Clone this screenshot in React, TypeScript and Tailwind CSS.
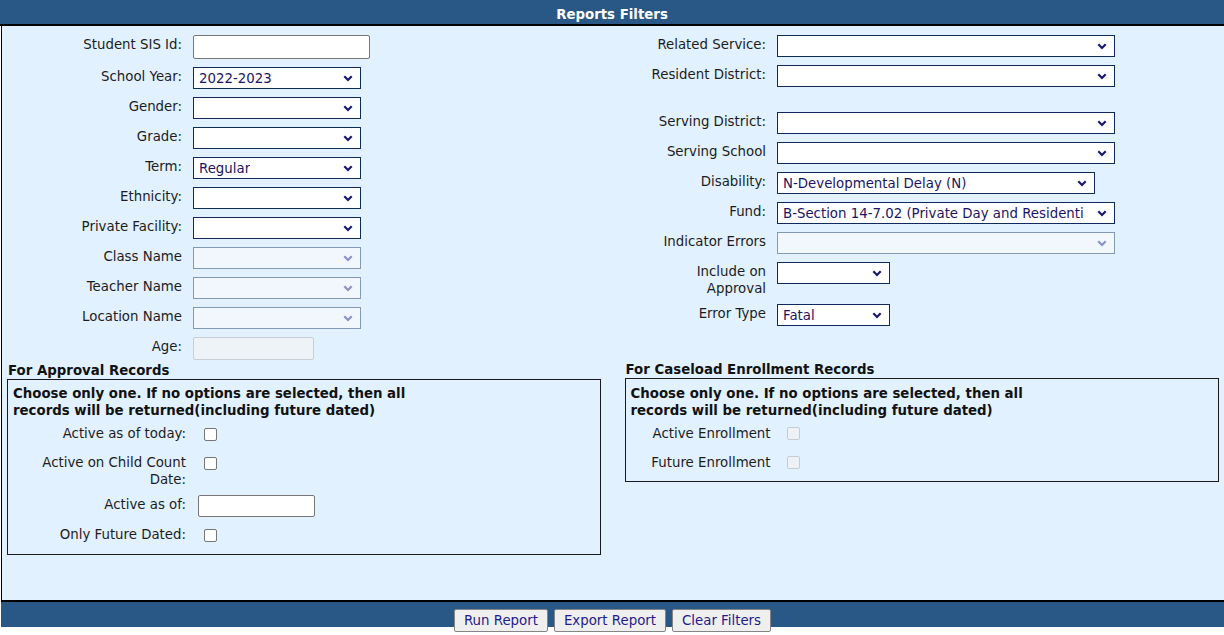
import React from "react";

const FONT = "font-['DejaVu_Sans',Verdana,sans-serif] text-[13.33px]";

function Chevron({ disabled }: { disabled?: boolean }) {
  return (
    <svg width="10" height="7" viewBox="0 0 10 7" className="shrink-0">
      <path
        d="M1.3 1.3 L5 5 L8.7 1.3"
        fill="none"
        stroke={disabled ? "#8c90cc" : "#1b1670"}
        strokeWidth="2.2"
      />
    </svg>
  );
}

function Select({ w, value, disabled }: { w: string; value?: string; disabled?: boolean }) {
  return (
    <div
      className={`flex h-[22px] items-center justify-between gap-[4px] border pl-[5px] pr-[7px] ${w} ${
        disabled ? "border-[#8399b8] bg-[#f2f7fd]" : "border-[#0e2c5b] bg-white"
      }`}
    >
      <span className="overflow-hidden whitespace-nowrap pt-[1px] leading-[20px] text-[#1b1464]">{value}</span>
      <Chevron disabled={disabled} />
    </div>
  );
}

function TextBox({ w, h, disabled }: { w: string; h: string; disabled?: boolean }) {
  return (
    <div
      className={`rounded-[2px] border ${w} ${h} ${
        disabled ? "border-[#c9ced4] bg-[#eef3f8]" : "border-[#767676] bg-white"
      }`}
    />
  );
}

function Check({ disabled }: { disabled?: boolean }) {
  return (
    <div
      className={`h-[13px] w-[13px] rounded-[2px] border ${
        disabled ? "border-[#c6ccd3] bg-[#eef2f7]" : "border-[#767676] bg-white"
      }`}
    />
  );
}

function LeftRow({ label, children, h = "h-[22px]" }: { label: React.ReactNode; children: React.ReactNode; h?: string }) {
  return (
    <div className={`flex items-start ${h}`}>
      <div className="w-[180px] pt-[1px] text-right leading-[17px] text-[#1c1c1c]">{label}</div>
      <div className="ml-[11px]">{children}</div>
    </div>
  );
}

function RightRow({ label, children, h = "h-[22px]", cls = "" }: { label: React.ReactNode; children: React.ReactNode; h?: string; cls?: string }) {
  return (
    <div className={`flex items-start ${h} ${cls}`}>
      <div className="w-[164px] pt-[1px] text-right leading-[17px] text-[#1c1c1c]">{label}</div>
      <div className="ml-[11px]">{children}</div>
    </div>
  );
}

const NOTE = (
  <p className="font-bold leading-[17px] text-[#111]">
    Choose only one. If no options are selected, then all
    <br />
    records will be returned(including future dated)
  </p>
);

export default function App() {
  return (
    <div className={`w-[1224px] h-[635px] overflow-hidden bg-white ${FONT}`}>
      {/* title bar */}
      <div className="h-[26px] border-b-2 border-black bg-[#295887] pt-[6px] text-center font-bold leading-[17px] text-white">
        Reports Filters
      </div>

      {/* body */}
      <div className="ml-[1px] h-[574px] border-l border-black bg-[#e2f1ff]">
        <div className="flex items-start pt-[9px]">
          {/* left column */}
          <div className="flex w-[600px] flex-col gap-[8px]">
            <LeftRow label="Student SIS Id:" h="h-[24px]">
              <TextBox w="w-[177px]" h="h-[24px]" />
            </LeftRow>
            <LeftRow label="School Year:">
              <Select w="w-[168px]" value="2022-2023" />
            </LeftRow>
            <LeftRow label="Gender:">
              <Select w="w-[168px]" />
            </LeftRow>
            <LeftRow label="Grade:">
              <Select w="w-[168px]" />
            </LeftRow>
            <LeftRow label="Term:">
              <Select w="w-[168px]" value="Regular" />
            </LeftRow>
            <LeftRow label="Ethnicity:">
              <Select w="w-[168px]" />
            </LeftRow>
            <LeftRow label="Private Facility:">
              <Select w="w-[168px]" />
            </LeftRow>
            <LeftRow label="Class Name">
              <Select w="w-[168px]" disabled />
            </LeftRow>
            <LeftRow label="Teacher Name">
              <Select w="w-[168px]" disabled />
            </LeftRow>
            <LeftRow label="Location Name">
              <Select w="w-[168px]" disabled />
            </LeftRow>
            <LeftRow label="Age:" h="h-[23px]">
              <TextBox w="w-[121px]" h="h-[23px]" disabled />
            </LeftRow>
          </div>

          {/* right column */}
          <div className="flex flex-col gap-[8px]">
            <RightRow label="Related Service:">
              <Select w="w-[338px]" />
            </RightRow>
            <RightRow label="Resident District:">
              <Select w="w-[338px]" />
            </RightRow>
            <RightRow label="Serving District:" cls="mt-[17px]">
              <Select w="w-[338px]" />
            </RightRow>
            <RightRow label="Serving School">
              <Select w="w-[338px]" />
            </RightRow>
            <RightRow label="Disability:">
              <Select w="w-[318px]" value="N-Developmental Delay (N)" />
            </RightRow>
            <RightRow label="Fund:">
              <Select w="w-[338px]" value="B-Section 14-7.02 (Private Day and Residenti" />
            </RightRow>
            <RightRow label="Indicator Errors">
              <Select w="w-[338px]" disabled />
            </RightRow>
            <RightRow label={<>Include on<br />Approval</>} h="h-[34px]">
              <Select w="w-[113px]" />
            </RightRow>
            <RightRow label="Error Type">
              <Select w="w-[113px]" value="Fatal" />
            </RightRow>
          </div>
        </div>

        {/* record sections */}
        <div className="mt-[2px] flex items-start gap-[24px] px-[5px]">
          <div className="w-[594px]">
            <h3 className="pl-[1px] font-bold leading-[17px] text-[#111]">For Approval Records</h3>
            <div className="h-[176px] border border-[#1a1a1a] pl-[5px] pt-[5px]">
              {NOTE}
              <div className="mt-[6px] flex h-[17px] items-start">
                <div className="w-[173px] text-right leading-[17px] text-[#1c1c1c]">Active as of today:</div>
                <div className="ml-[18px] pt-[3px]"><Check /></div>
              </div>
              <div className="mt-[12px] flex h-[34px] items-start">
                <div className="w-[173px] text-right leading-[17px] text-[#1c1c1c]">Active on Child Count<br />Date:</div>
                <div className="ml-[18px] pt-[3px]"><Check /></div>
              </div>
              <div className="mt-[7px] flex h-[22px] items-start">
                <div className="w-[173px] pt-[1px] text-right leading-[17px] text-[#1c1c1c]">Active as of:</div>
                <div className="ml-[12px]"><TextBox w="w-[117px]" h="h-[22px]" /></div>
              </div>
              <div className="mt-[9px] flex h-[17px] items-start">
                <div className="w-[173px] text-right leading-[17px] text-[#1c1c1c]">Only Future Dated:</div>
                <div className="ml-[18px] pt-[3px]"><Check /></div>
              </div>
            </div>
          </div>

          <div className="w-[595px]">
            <h3 className="pl-[1px] font-bold leading-[16px] text-[#111]">For Caseload Enrollment Records</h3>
            <div className="h-[104px] border border-[#1a1a1a] pl-[5px] pt-[6px]">
              {NOTE}
              <div className="mt-[6px] flex h-[17px] items-start">
                <div className="w-[140px] text-right leading-[17px] text-[#1c1c1c]">Active Enrollment</div>
                <div className="ml-[16px] pt-[2px]"><Check disabled /></div>
              </div>
              <div className="mt-[12px] flex h-[17px] items-start">
                <div className="w-[140px] text-right leading-[17px] text-[#1c1c1c]">Future Enrollment</div>
                <div className="ml-[16px] pt-[2px]"><Check disabled /></div>
              </div>
            </div>
          </div>
        </div>
      </div>

      {/* footer bar */}
      <div className="ml-[1px] h-[27px] border-t-2 border-black bg-[#295887]">
        <div className="flex justify-center gap-[6px] pt-[7px]">
          {["Run Report", "Export Report", "Clear Filters"].map((b) => (
            <button
              key={b}
              className="h-[23px] rounded-[2px] border border-[#858585] bg-[#efefef] px-[9px] leading-[20px] text-[#241a8c]"
            >
              {b}
            </button>
          ))}
        </div>
      </div>
    </div>
  );
}
